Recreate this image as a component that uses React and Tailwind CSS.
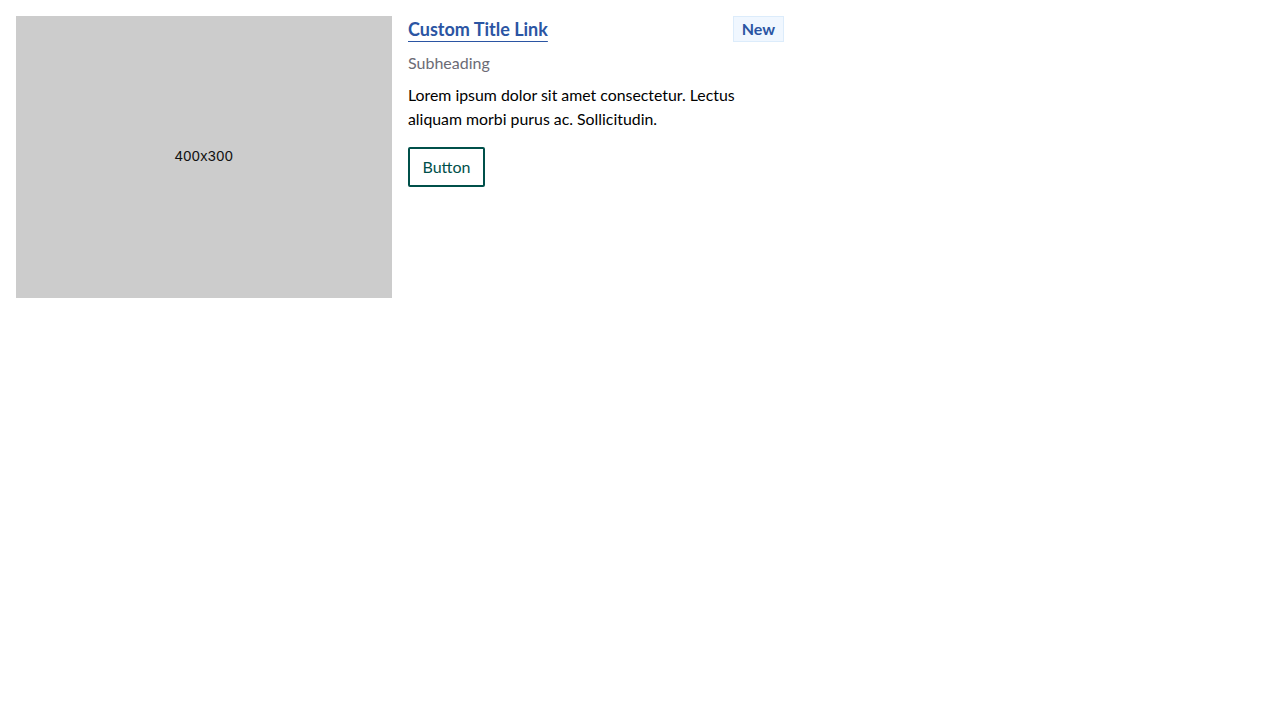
export default function App() {
  return (
    <div className="min-h-screen bg-white p-4 font-['Lato',sans-serif]">
      <div className="grid w-[768px] grid-cols-2 gap-4">
        <div className="flex h-[282px] items-center justify-center bg-[#cccccc]">
          <span className="font-['Liberation_Sans',Arial,sans-serif] text-[14.5px] tracking-[0.4px] text-[#111]">400x300</span>
        </div>
        <div className="flex flex-col">
          <div className="flex items-start justify-between">
            <a href="#" className="text-[18px] font-bold leading-[26px] text-[#2b55a3] underline decoration-[#2b55a3] decoration-1 underline-offset-[5px]">
              Custom Title Link
            </a>
            <span className="flex h-[26px] items-center border border-[#dcecfb] bg-[#f0f7ff] px-2 text-[16px] font-bold text-[#2b55a3]">
              New
            </span>
          </div>
          <p className="mt-[9px] text-[16px] leading-[24px] text-[#6b6b75]">Subheading</p>
          <p className="mt-[8px] text-[15.85px] leading-[24px] text-black">
            Lorem ipsum dolor sit amet consectetur. Lectus aliquam morbi purus ac. Sollicitudin.
          </p>
          <div className="mt-[16px]">
            <button className="h-[40px] rounded-[2px] border-2 border-[#00504a] px-[12.5px] text-[16px] text-[#00504a]">
              Button
            </button>
          </div>
        </div>
      </div>
    </div>
  );
}
